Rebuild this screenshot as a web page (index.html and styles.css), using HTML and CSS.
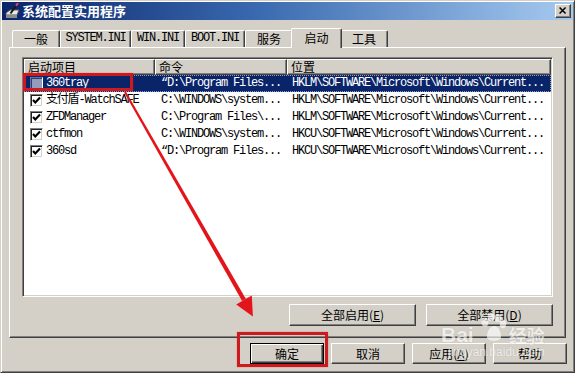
FILE: index.html
```html
<!DOCTYPE html>
<html>
<head>
<meta charset="utf-8">
<title>系统配置实用程序</title>
<link rel="stylesheet" href="styles.css">
</head>
<body>
<div class="window">
  <div class="titlebar">
    <svg class="app-icon" viewBox="0 0 16 16" width="16" height="16">
      <path d="M1 10 L5 7 L14 7 L12 12 L1 12 Z" fill="#e8e8e8" stroke="#5a5a5a" stroke-width="1"/>
      <rect x="1" y="12" width="11" height="3" fill="#8c8c8c"/>
      <path d="M5.5 10.5 L11.5 2" stroke="#1a1a1a" stroke-width="2"/>
      <path d="M11 2.8 L13 0" stroke="#e0407a" stroke-width="2"/>
    </svg>
    <span class="title">系统配置实用程序</span>
    <div class="close">
      <svg viewBox="0 0 16 14" width="14" height="12">
        <path d="M4 3 L11 10 M11 3 L4 10" stroke="#000" stroke-width="1.8"/>
      </svg>
    </div>
  </div>

  <div class="tabs">
    <div class="tab w48">一般</div>
    <div class="tab w71 mono">SYSTEM.INI</div>
    <div class="tab w54 mono">WIN.INI</div>
    <div class="tab w60 mono">BOOT.INI</div>
    <div class="tab w48">服务</div>
    <div class="tab sel">启动</div>
    <div class="tab w48">工具</div>
  </div>

  <div class="panel">
    <div class="listbox">
      <div class="lhead">
        <div class="hcell c1">启动项目</div>
        <div class="hcell c2">命令</div>
        <div class="hcell c3">位置</div>
      </div>
      <div class="row selected">
        <div class="cell c1"><span class="cb"></span><span class="mono">360tray</span></div>
        <div class="cell c2 mono">“D:\Program Files...</div>
        <div class="cell c3 mono">HKLM\SOFTWARE\Microsoft\Windows\Current...</div>
      </div>
      <div class="row">
        <div class="cell c1"><span class="cb on"><svg viewBox="0 0 11 11" width="11" height="11"><path d="M2 5 L4.3 7.4 L9 2.6" stroke="#000" stroke-width="2.2" fill="none"/></svg></span><span class="mono">支付盾-WatchSAFE</span></div>
        <div class="cell c2 mono">C:\WINDOWS\system...</div>
        <div class="cell c3 mono">HKLM\SOFTWARE\Microsoft\Windows\Current...</div>
      </div>
      <div class="row">
        <div class="cell c1"><span class="cb on"><svg viewBox="0 0 11 11" width="11" height="11"><path d="M2 5 L4.3 7.4 L9 2.6" stroke="#000" stroke-width="2.2" fill="none"/></svg></span><span class="mono">ZFDManager</span></div>
        <div class="cell c2 mono">C:\Program Files\...</div>
        <div class="cell c3 mono">HKLM\SOFTWARE\Microsoft\Windows\Current...</div>
      </div>
      <div class="row">
        <div class="cell c1"><span class="cb on"><svg viewBox="0 0 11 11" width="11" height="11"><path d="M2 5 L4.3 7.4 L9 2.6" stroke="#000" stroke-width="2.2" fill="none"/></svg></span><span class="mono">ctfmon</span></div>
        <div class="cell c2 mono">C:\WINDOWS\system...</div>
        <div class="cell c3 mono">HKCU\SOFTWARE\Microsoft\Windows\Current...</div>
      </div>
      <div class="row">
        <div class="cell c1"><span class="cb on"><svg viewBox="0 0 11 11" width="11" height="11"><path d="M2 5 L4.3 7.4 L9 2.6" stroke="#000" stroke-width="2.2" fill="none"/></svg></span><span class="mono">360sd</span></div>
        <div class="cell c2 mono">“D:\Program Files...</div>
        <div class="cell c3 mono">HKCU\SOFTWARE\Microsoft\Windows\Current...</div>
      </div>
    </div>
    <div class="pbtns">
      <button class="btn wide">全部启用(<u>E</u>)</button>
      <button class="btn wide">全部禁用(<u>D</u>)</button>
    </div>
  </div>

  <div class="dbtns">
    <button class="btn dlg default">确定</button>
    <button class="btn dlg">取消</button>
    <button class="btn dlg">应用(<u>A</u>)</button>
    <button class="btn dlg">帮助</button>
  </div>
</div>

<div class="annot box-item"></div>
<div class="annot box-ok"></div>
<svg class="arrow" viewBox="0 0 575 373" width="575" height="373">
  <polygon points="125.9,91.5 124.1,92.5 242.1,301.1 245.9,298.9" fill="#e3141a"/>
  <polygon points="251.8,295.5 236.2,304.5 252.9,316.5" fill="#e3141a"/>
</svg>

<div class="watermark">
  <div class="wm-top">
    <span class="wm-bai">Bai</span>
    <svg class="wm-paw" viewBox="0 0 28 30" width="28" height="30">
      <ellipse cx="6" cy="9" rx="3.5" ry="4.5" fill="#fff"/>
      <ellipse cx="12" cy="4" rx="3.5" ry="4" fill="#fff"/>
      <ellipse cx="19" cy="5" rx="3.5" ry="4" fill="#fff"/>
      <ellipse cx="24" cy="11" rx="3.2" ry="4.2" fill="#fff"/>
      <path d="M8 24 C8 17 12 13 15 13 C19 13 22 18 22 24 C22 29 8 29 8 24 Z" fill="#fff"/>
    </svg>
    <span class="wm-jy">经验</span>
  </div>
  <div class="wm-url">jingyan.baidu.com</div>
</div>
</body>
</html>
```

FILE: styles.css
```css
* { box-sizing: border-box; }
html, body { margin: 0; padding: 0; }
body {
  width: 575px;
  height: 373px;
  overflow: hidden;
  position: relative;
  background: #d4d0c8;
  font-family: "Noto Sans CJK SC", sans-serif;
  font-size: 12px;
  color: #000;
}

.mono {
  font-family: "Liberation Mono", "Noto Sans CJK SC", monospace;
  letter-spacing: -1.2px;
}

.window {
  width: 575px;
  height: 373px;
  background: #d4d0c8;
  border: 1px solid;
  border-color: #d4d0c8 #404040 #404040 #d4d0c8;
  box-shadow: inset 1px 1px #fff, inset -1px -1px #808080;
  padding: 1px;
  display: flex;
  flex-direction: column;
}

.titlebar {
  height: 18px;
  flex: none;
  background: linear-gradient(to right, #0a246a, #3a6ab0 45%, #a6caf0);
  display: flex;
  align-items: center;
  padding: 0 2px 0 3px;
}
.app-icon { flex: none; }
.title {
  flex: 1;
  color: #fff;
  font-weight: bold;
  font-size: 13px;
  line-height: 18px;
  margin-left: 1px;
}
.close {
  width: 16px;
  height: 14px;
  background: #d4d0c8;
  border: 1px solid;
  border-color: #fff #404040 #404040 #fff;
  box-shadow: inset -1px -1px #808080;
  display: flex;
  align-items: center;
  justify-content: center;
}

.tabs {
  height: 19px;
  margin-top: 8px;
  padding-left: 10px;
  display: flex;
  align-items: flex-end;
  flex: none;
}
.tab {
  height: 17px;
  border-top: 1px solid #fff;
  border-left: 1px solid #fff;
  border-right: 1px solid #404040;
  box-shadow: inset -1px 0 #808080;
  border-radius: 2px 2px 0 0;
  text-align: center;
  line-height: 15px;
  font-size: 12px;
  white-space: nowrap;
  flex: none;
}
.w48 { width: 48px; }
.w71 { width: 71px; }
.w54 { width: 54px; }
.w60 { width: 60px; }
.tab.sel {
  width: 51px;
  height: 20px;
  margin: 0 -2px -1px -2px;
  position: relative;
  z-index: 2;
  background: #d4d0c8;
  line-height: 17px;
}

.panel {
  margin-left: 7px;
  width: 557px;
  height: 291px;
  flex: none;
  border: 1px solid;
  border-color: #fff #404040 #404040 #fff;
  box-shadow: inset -1px -1px #808080;
  padding: 9px 12px 0 12px;
  display: flex;
  flex-direction: column;
}

.listbox {
  width: 531px;
  height: 240px;
  background: #fff;
  border: 1px solid;
  border-color: #808080 #fff #fff #808080;
  box-shadow: inset 1px 1px #404040, inset -1px -1px #d4d0c8;
  padding: 1px;
  display: flex;
  flex-direction: column;
}
.lhead {
  display: flex;
  height: 16px;
  flex: none;
}
.hcell {
  background: #d4d0c8;
  border: 1px solid;
  border-color: #fff #404040 #404040 #fff;
  box-shadow: inset -1px -1px #808080;
  padding-left: 3px;
  line-height: 13px;
  font-size: 12px;
  white-space: nowrap;
}
.c1 { width: 131px; flex: none; }
.c2 { width: 132px; flex: none; }
.c3 { width: 264px; flex: none; }

.row {
  display: flex;
  height: 17px;
  align-items: center;
  flex: none;
}
.row.selected {
  background: #0a246a;
  color: #fff;
  outline: 1px dotted #8f9bc4;
  outline-offset: -1px;
}
.cell {
  white-space: nowrap;
  overflow: hidden;
  height: 17px;
  line-height: 17px;
}
.cell.c1 {
  display: flex;
  align-items: center;
  padding-left: 6px;
  gap: 3px;
}
.cell.c2 { padding-left: 6px; }
.cell.c3 { padding-left: 5px; }

.cb {
  width: 13px;
  height: 13px;
  flex: none;
  background: #fff;
  border: 1px solid;
  border-color: #808080 #fff #fff #808080;
  box-shadow: inset 1px 1px #202020, inset -1px -1px #d4d0c8;
  display: flex;
  align-items: center;
  justify-content: center;
}
.row.selected .cb {
  background: #939cbd;
  border-color: #6a72a0 #fff #fff #6a72a0;
  box-shadow: inset 1px 1px #303a70;
}

.pbtns {
  display: flex;
  justify-content: flex-end;
  gap: 10px;
  margin-top: 7px;
}
.btn {
  font-family: "Noto Sans CJK SC", sans-serif;
  font-size: 12px;
  color: #000;
  background: #d4d0c8;
  border: 1px solid;
  border-color: #fff #404040 #404040 #fff;
  box-shadow: inset -1px -1px #808080;
  padding: 0;
  height: 22px;
  line-height: 18px;
}
.btn u { text-decoration: underline; }
.btn.wide { width: 127px; }

.dbtns {
  display: flex;
  justify-content: flex-end;
  gap: 7px;
  margin-top: 5px;
  padding-right: 6px;
}
.btn.dlg { width: 74px; height: 21px; line-height: 17px; }
.btn.default {
  border-color: #000;
  box-shadow: inset 1px 1px #fff, inset -1px -1px #404040, inset -2px -2px #808080;
}

.annot {
  position: absolute;
  border: 3px solid #cc1a1e;
  box-shadow: 0 0 1px rgba(220, 40, 40, 0.7);
}
.box-item { left: 23px; top: 73px; width: 110px; height: 18px; }
.box-ok { left: 237px; top: 332px; width: 91px; height: 35px; }

.arrow {
  position: absolute;
  left: 0;
  top: 0;
  pointer-events: none;
}

.watermark {
  position: absolute;
  left: 441px;
  top: 313px;
  width: 134px;
  color: #fff;
  opacity: 0.65;
  text-shadow: 0 0 1px #9a968e;
  pointer-events: none;
}
.wm-top {
  display: flex;
  align-items: flex-end;
  height: 30px;
}
.wm-bai {
  font-family: "Liberation Sans", sans-serif;
  font-weight: bold;
  font-size: 21px;
  line-height: 18px;
  margin-bottom: -1px;
}
.wm-paw { margin: 0 2px 0 5px; flex: none; }
.wm-jy {
  font-size: 18px;
  line-height: 18px;
  font-weight: bold;
  margin-bottom: -1px;
}
.wm-url {
  font-family: "Liberation Sans", sans-serif;
  font-size: 12px;
  line-height: 12px;
  margin-top: 3px;
  padding-left: 7px;
}
```
